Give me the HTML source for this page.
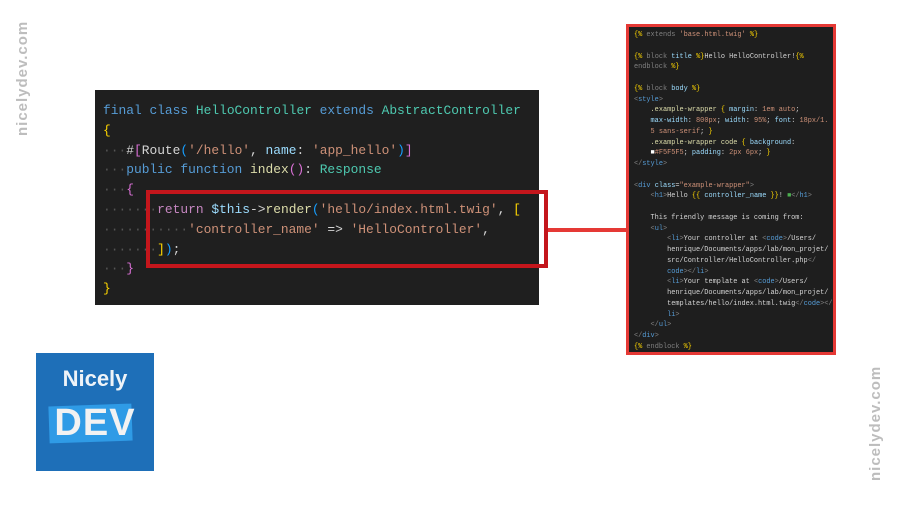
<!DOCTYPE html>
<html><head><meta charset="utf-8"><style>
body{margin:0;width:900px;height:506px;background:#fff;position:relative;overflow:hidden;font-family:"Liberation Sans",sans-serif}
.code{position:absolute;left:95px;top:90px;width:444px;height:215px;background:#1f1f1f}
.code pre{margin:0;position:absolute;left:8px;top:11px;font:12.9px/19.8px "Liberation Mono",monospace;color:#d4d4d4}
.k{color:#569cd6}.c{color:#4ec9b0}.s{color:#ce9178}.f{color:#dcdcaa}.y{color:#ffd700}.p{color:#da70d6}.b{color:#179fff}.r{color:#c586c0}.v{color:#9cdcfe}.d{color:#555}
.rb{position:absolute;left:146px;top:190px;width:394px;height:70px;border:4px solid #c4161c}
.ln{position:absolute;left:548px;top:228px;width:80px;height:4px;background:#e53935}
.tw{position:absolute;left:626px;top:24px;width:204px;height:325px;border:3px solid #e53935;background:#1e1e1e;overflow:hidden}
.tw pre{margin:0;position:absolute;left:5px;top:3px;font:6.9px/10.75px "Liberation Mono",monospace;color:#d4d4d4}
.t{color:#808080}.g{color:#4ec9b0}
.wm{position:absolute;color:#bdbdbd;font-weight:bold;font-size:15px;letter-spacing:1px;transform:rotate(-90deg);transform-origin:left top;white-space:nowrap}
.logo{position:absolute;left:36px;top:353px;width:118px;height:118px;background:#1e6fb8;overflow:hidden}
</style></head><body>
<div class="wm" style="left:14px;top:136px">nicelydev.com</div>
<div class="wm" style="left:867px;top:481px">nicelydev.com</div>
<div class="code"><pre><span class="k">final</span> <span class="k">class</span> <span class="c">HelloController</span> <span class="k">extends</span> <span class="c">AbstractController</span>
<span class="y">{</span>
<span class="d">···</span><span>#</span><span class="p">[</span>Route<span class="b">(</span><span class="s">'/hello'</span>, <span class="v">name</span>: <span class="s">'app_hello'</span><span class="b">)</span><span class="p">]</span>
<span class="d">···</span><span class="k">public</span> <span class="k">function</span> <span class="f">index</span><span class="p">()</span>: <span class="c">Response</span>
<span class="d">···</span><span class="p">{</span>
<span class="d">·······</span><span class="r">return</span> <span class="v">$this</span>-&gt;<span class="f">render</span><span class="b">(</span><span class="s">'hello/index.html.twig'</span>, <span class="y">[</span>
<span class="d">···········</span><span class="s">'controller_name'</span> =&gt; <span class="s">'HelloController'</span>,
<span class="d">·······</span><span class="y">]</span><span class="b">)</span>;
<span class="d">···</span><span class="p">}</span>
<span class="y">}</span></pre></div>
<div class="rb"></div>
<div class="ln"></div>
<div class="tw"><pre><span class="y">{%</span> <span class="t">extends</span> <span class="s">'base.html.twig'</span> <span class="y">%}</span>

<span class="y">{%</span> <span class="t">block</span> <span class="v">title</span> <span class="y">%}</span>Hello HelloController!<span class="y">{%</span>
<span class="t">endblock</span> <span class="y">%}</span>

<span class="y">{%</span> <span class="t">block</span> <span class="v">body</span> <span class="y">%}</span>
<span class="t">&lt;</span><span class="k">style</span><span class="t">&gt;</span>
    <span class="f">.example-wrapper</span> <span class="y">{</span> <span class="v">margin</span>: <span class="s">1em auto</span>;
    <span class="v">max-width</span>: <span class="s">800px</span>; <span class="v">width</span>: <span class="s">95%</span>; <span class="v">font</span>: <span class="s">18px/1.</span>
    <span class="s">5 sans-serif</span>; <span class="y">}</span>
    <span class="f">.example-wrapper code</span> <span class="y">{</span> <span class="v">background</span>:
    <span style="color:#fff">■</span><span class="s">#F5F5F5</span>; <span class="v">padding</span>: <span class="s">2px 6px</span>; <span class="y">}</span>
<span class="t">&lt;/</span><span class="k">style</span><span class="t">&gt;</span>

<span class="t">&lt;</span><span class="k">div</span> <span class="v">class</span>=<span class="s">"example-wrapper"</span><span class="t">&gt;</span>
    <span class="t">&lt;</span><span class="k">h1</span><span class="t">&gt;</span>Hello <span class="y">{{</span> <span class="v">controller_name</span> <span class="y">}}</span>! <span style="color:#4caf50">■</span><span class="t">&lt;/</span><span class="k">h1</span><span class="t">&gt;</span>

    This friendly message is coming from:
    <span class="t">&lt;</span><span class="k">ul</span><span class="t">&gt;</span>
        <span class="t">&lt;</span><span class="k">li</span><span class="t">&gt;</span>Your controller at <span class="t">&lt;</span><span class="k">code</span><span class="t">&gt;</span>/Users/
        henrique/Documents/apps/lab/mon_projet/
        src/Controller/HelloController.php<span class="t">&lt;/</span>
        <span class="k">code</span><span class="t">&gt;&lt;/</span><span class="k">li</span><span class="t">&gt;</span>
        <span class="t">&lt;</span><span class="k">li</span><span class="t">&gt;</span>Your template at <span class="t">&lt;</span><span class="k">code</span><span class="t">&gt;</span>/Users/
        henrique/Documents/apps/lab/mon_projet/
        templates/hello/index.html.twig<span class="t">&lt;/</span><span class="k">code</span><span class="t">&gt;&lt;/</span>
        <span class="k">li</span><span class="t">&gt;</span>
    <span class="t">&lt;/</span><span class="k">ul</span><span class="t">&gt;</span>
<span class="t">&lt;/</span><span class="k">div</span><span class="t">&gt;</span>
<span class="y">{%</span> <span class="t">endblock</span> <span class="y">%}</span></pre></div>
<div class="logo">
<div style="position:absolute;left:0;width:118px;top:13px;text-align:center;color:#eef3f8;font:bold 22px 'Liberation Sans Narrow','Liberation Sans',sans-serif">Nicely</div>
<div style="position:absolute;left:13px;top:52px;width:83px;height:37px;background:#2f9be6;transform:rotate(-2deg)"></div>
<div style="position:absolute;left:0;width:118px;top:50px;text-align:center;color:#f2f2f2;font:bold 38px/40px 'Liberation Sans Narrow','Liberation Sans',sans-serif;letter-spacing:1px">DEV</div>
</div>
</body></html>
